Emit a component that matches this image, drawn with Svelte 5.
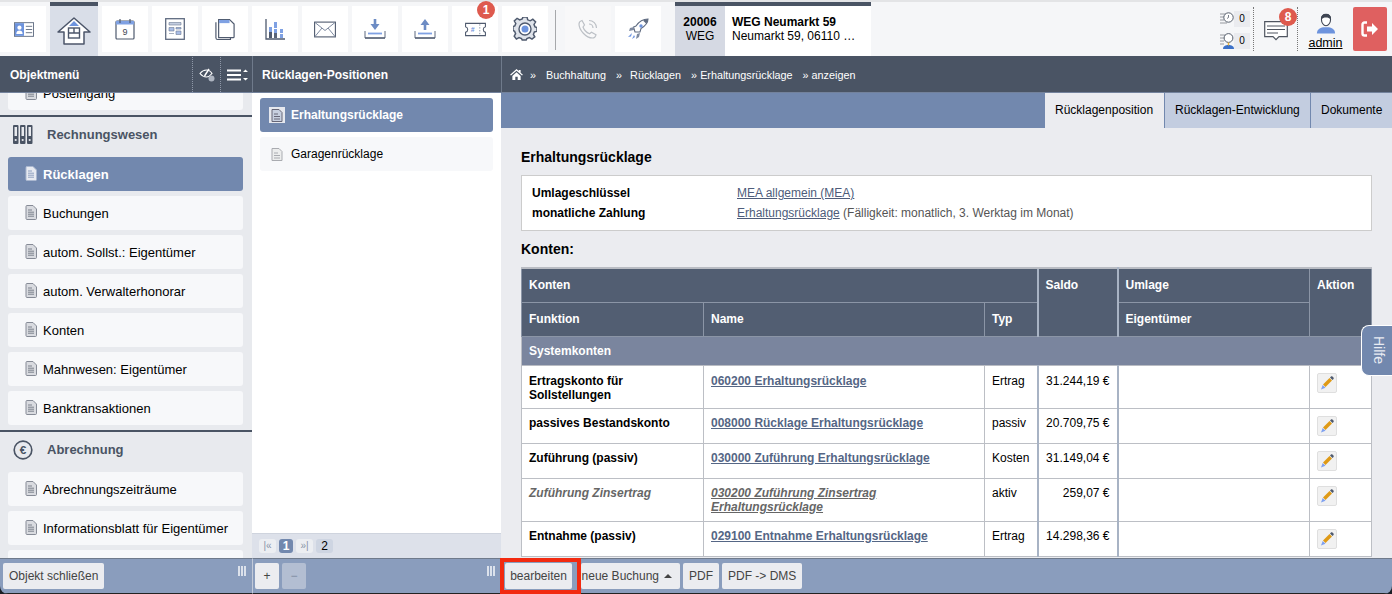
<script>
  const sideA = ['Buchungen','autom. Sollst.: Eigentümer','autom. Verwalterhonorar','Konten','Mahnwesen: Eigentümer','Banktransaktionen'];
  const sideB = ['Abrechnungszeiträume','Informationsblatt für Eigentümer',''];
  const rows = [
    {f:'Ertragskonto für Sollstellungen',n:'060200 Erhaltungsrücklage',t:'Ertrag',s:'31.244,19 €'},
    {f:'passives Bestandskonto',n:'008000 Rücklage Erhaltungsrücklage',t:'passiv',s:'20.709,75 €'},
    {f:'Zuführung (passiv)',n:'030000 Zuführung Erhaltungsrücklage',t:'Kosten',s:'31.149,04 €'},
    {f:'Zuführung Zinsertrag',n:'030200 Zuführung Zinsertrag Erhaltungsrücklage',t:'aktiv',s:'259,07 €',muted:true},
    {f:'Entnahme (passiv)',n:'029100 Entnahme Erhaltungsrücklage',t:'Ertrag',s:'14.298,36 €'}
  ];
</script>

{#snippet doc()}
  <svg class="doc" viewBox="0 0 12 15" width="12" height="15"><path d="M1 1.500C1 .9 1.400.5 2 .5h6l3.500 3.500v9.500c0 .6-.4 1-1 1H2c-.6 0-1-.4-1-1z" fill="#d9dbe0" stroke="#868b96"/><path d="M3 5h4M3 7.200h6M3 9.200h6M3 11.200h6" stroke="#7c818c" fill="none"/></svg>
{/snippet}

{#snippet grip()}
  <svg class="grip" viewBox="0 0 9 10" width="9" height="10"><path d="M1 0v10M4 0v10M7 0v10" stroke="#fff" stroke-width="1.400"/></svg>
{/snippet}

<div class="app">
  <header class="top">
    <nav class="tiles">
      <button class="tile first" aria-label="Kontakt">
        <svg viewBox="0 0 22 16" width="20" height="15"><rect x=".5" y=".5" width="21" height="15" fill="#fff" stroke="#5f6b80"/><rect x="1" y="1" width="10" height="14" fill="#6d93dd"/><circle cx="6" cy="6" r="2.300" fill="#fff"/><path d="M2.500 13c0-3 1.500-4 3.500-4s3.500 1 3.500 4z" fill="#fff"/><path d="M13 4.500h7M13 8h7M13 11.500h7" stroke="#5f6b80"/></svg>
      </button>
      <button class="tile home" aria-label="Objekt">
        <svg viewBox="0 0 34 28" width="34" height="28"><path d="M1 15 17 1l16 14h-6v12H7V15z" fill="#fff" stroke="#4c566a" stroke-width="1.500" stroke-linejoin="round"/><path d="M12 9l5-5 5 5z" fill="#6d93dd"/><rect x="11.500" y="11" width="11" height="10" fill="#fff" stroke="#4c566a" stroke-width="1.400"/><path d="M17 11v5M11.500 16h11" stroke="#4c566a" stroke-width="1.400"/></svg>
      </button>
      <button class="tile" aria-label="Kalender">
        <svg viewBox="0 0 20 22" width="20" height="22"><rect x="1" y="3" width="18" height="18" rx="1" fill="#fff" stroke="#4f5a6e" stroke-width="1.200"/><path d="M1 3h18v3.500H1z" fill="#7fa1e3"/><path d="M5 1v4M15 1v4" stroke="#4f5a6e" stroke-width="1.200"/><text x="10" y="17" class="cal">9</text></svg>
      </button>
      <button class="tile" aria-label="Formular">
        <svg viewBox="0 0 20 22" width="20" height="22"><rect x=".7" y=".7" width="18.600" height="20.600" fill="#fff" stroke="#5f6b80" stroke-width="1.300"/><path d="M4 4.500h12v2.500H4z" fill="#c3cde0" stroke="#6c7a93" stroke-width=".6"/><path d="M4 9.500h5v3.500H4zM11 9.500h5v1.500h-5zM4 15.500h5M11 13h5v3.500h-5z" fill="#a9bde6" stroke="#6c7a93" stroke-width=".6"/></svg>
      </button>
      <button class="tile" aria-label="Dokumente">
        <svg viewBox="0 0 22 24" width="20" height="23"><path d="M1 4v17c0 1 .7 2 2 2h14v-2" fill="none" stroke="#4f5a6e" stroke-width="1.300"/><path d="M4 1h12l5 5v14c0 .6-.4 1-1 1H4z" fill="#fff" stroke="#4f5a6e" stroke-width="1.300"/><path d="M4.500 1.500H16v3.500H4.500z" fill="#7fa1e3"/></svg>
      </button>
      <button class="tile" aria-label="Statistik">
        <svg viewBox="0 0 20 21" width="20" height="21"><path d="M1 0v20h19" fill="none" stroke="#4f5a6e" stroke-width="1.300"/><path d="M4 8h3v11H4zM9 3h3v6H9zM9 10h3v9H9zM15 10h3v4h-3zM15 15h3v4h-3z" fill="#7fa1e3"/><path d="M4 13h3v6H4z" fill="#4f5a6e"/><path d="M9 14h3v5H9z" fill="#5a6579"/></svg>
      </button>
      <button class="tile" aria-label="Post">
        <svg viewBox="0 0 22 16" width="22" height="17"><rect x=".6" y=".6" width="20.800" height="14.800" fill="#fff" stroke="#4f5a6e" stroke-width="1.100"/><path d="M1 1l10 8 10-8M1 15l7-8.500M21 15l-7-8.500" fill="none" stroke="#7e8aa0"/></svg>
      </button>
      <button class="tile" aria-label="Import">
        <svg viewBox="0 0 22 20" width="22" height="20"><path d="M1 12v7h20v-7" fill="none" stroke="#5f6b80"/><path d="M1 19h20" stroke="#4f5a6e" stroke-width="1.300"/><path d="M4 14.500h14" stroke="#7fa1e3" stroke-width="1.800"/><path d="M9.700 0h2.600v5h3.200L11 11 6.500 5h3.200z" fill="#6d8cc4"/></svg>
      </button>
      <button class="tile" aria-label="Export">
        <svg viewBox="0 0 22 20" width="22" height="20"><path d="M1 12v7h20v-7" fill="none" stroke="#5f6b80"/><path d="M1 19h20" stroke="#4f5a6e" stroke-width="1.300"/><path d="M4 14.500h14" stroke="#7fa1e3" stroke-width="1.800"/><path d="M9.700 11h2.600V6h3.200L11 0 6.500 6h3.200z" fill="#6d8cc4"/></svg>
      </button>
      <button class="tile badged" aria-label="Tickets">
        <svg viewBox="0 0 22 14" width="21" height="15"><path d="M.6.6h20.800v3.500a3 3 0 0 0 0 5.800v3.500H.6V9.900a3 3 0 0 0 0-5.800z" fill="#fff" stroke="#4f5a6e" stroke-width="1.100"/><path d="M15.500 1.500v11" stroke="#8a94a6" stroke-dasharray="1.500 1.500"/><text x="8" y="10" class="hash">#</text></svg>
        <span class="badge b1">1</span>
      </button>
      <button class="tile" aria-label="Einstellungen">
        <svg viewBox="0 0 24 24" width="24" height="24"><path d="M10 1h4l.7 3 2.500 1 2.600-1.600 2.800 2.800L21 8.800l1 2.500 2 .7v4l-2.600.6-1 2.500 1.400 2.600-2.800 2.300-2.600-1.500-2.500 1-.7 1.500h-4l-.7-1.500-2.500-1-2.600 1.500L1.200 21l1.400-2.600-1-2.500L0 15v-4l1.800-.7 1-2.500-1.500-2.600 2.800-2.800 2.600 1.600 2.500-1z" transform="translate(0 -1) scale(1 .96)" fill="#dfe3ea" stroke="#4f5a6e" stroke-width="1.500"/><circle cx="12" cy="12" r="6" fill="#fff" stroke="#4f5a6e" stroke-width="1.400"/><circle cx="12" cy="12" r="3.500" fill="#6d93dd"/></svg>
      </button>
      <span class="sep"></span>
      <button class="tile off" aria-label="Telefon">
        <svg viewBox="0 0 20 20" width="20" height="20"><path d="M4 1.500 6.500 6 5 8c1 2.800 3.500 5.500 6.500 6.800l2-1.600 4.500 2.600c-.5 2-2 3.200-3.500 3.200C8 19 1 11 1 5c0-1.600 1.300-3 3-3.500z" fill="none" stroke="#bcc0c6" stroke-width="1.200"/><path d="M11 1.500a7.500 7.500 0 0 1 7.500 7.500M11 5a4 4 0 0 1 4 4" fill="none" stroke="#bcc0c6" stroke-width="1.200"/></svg>
      </button>
      <button class="tile" aria-label="Start">
        <svg viewBox="0 0 22 22" width="22" height="22"><path d="M21 1c-5 0-9 2.500-12 7l-2.500 1L8 14l5 0 1-3.500C18 8 21 5 21 1z" fill="#fff" stroke="#5f6b80" stroke-width="1.100"/><path d="M21 1c-2 .2-3.500.8-4.800 1.800l2.800 2.800C20.200 4.300 20.800 3 21 1z" fill="#5f6b80"/><circle cx="14" cy="8" r="1.700" fill="#6d93dd"/><path d="M7 9 3 10l-1 3 5-1zM13 15l-1 4-3 2 1-5z" fill="#7e8aa0"/><path d="M5 15l-4 4 3-.5z M7 17l-2 4 3-2z" fill="#6d93dd"/></svg>
      </button>
    </nav>
    <div class="objtab">
      <div class="objno"><b>20006</b><span>WEG</span></div>
      <div class="objname"><b>WEG Neumarkt 59</b><span>Neumarkt 59, 06110 …</span></div>
    </div>
    <div class="right">
      <div class="counters">
        <div class="cnt">
          <svg viewBox="0 0 14 14" width="14" height="14"><path d="M0 2h6M0 5h4M0 8h4M0 11h7" stroke="#c5c7cb" stroke-width="1.800"/><circle cx="8.500" cy="5.500" r="4.700" fill="#fff" stroke="#555d6b"/><path d="M8.500 3v2.500L7 6.500" fill="none" stroke="#555d6b" stroke-width=".8"/></svg>
          <span>0</span>
        </div>
        <div class="cnt">
          <svg viewBox="0 0 14 16" width="14" height="16"><path d="M0 2h6M0 5h4M0 8h4M0 11h4" stroke="#c5c7cb" stroke-width="1.800"/><circle cx="8.500" cy="5" r="4.400" fill="#fff" stroke="#555d6b"/><path d="M3 16c0-3 2.500-4 5.500-4s5.500 1 5.500 4z" fill="#3c71c8"/><path d="M8.500 9l1 2-1 2-1-2z" fill="#e8b23b"/></svg>
          <span>0</span>
        </div>
      </div>
      <div class="msg">
        <svg viewBox="0 0 24 20" width="24" height="20"><path d="M.7.7h22.600v15H15l-3 3-3-3H.7z" fill="#fff" stroke="#4f5560" stroke-width="1.200"/><path d="M3 5h18M3 8.500h18M3 12h11" stroke="#4f5560"/></svg>
        <span class="badge b8">8</span>
      </div>
      <div class="user">
        <svg viewBox="0 0 22 22" width="20" height="21"><path d="M1 22c0-4.500 3-6 7-7h6c4 1 7 2.500 7 7z" fill="#6d93dd"/><path d="M6 6.500C6 3 8 1 11 1s5 2 5 5.500-2.200 7-5 7-5-3.500-5-7z" fill="#fff" stroke="#3f4653" stroke-width="1.200"/><path d="M5.500 7C5 2.500 8 .5 11 .5S17 2.500 16.500 7C15 5 13 4.500 11 4.500S7 5 5.500 7z" fill="#3f4653"/></svg>
        <a href="#admin">admin</a>
      </div>
      <button class="logout" aria-label="Abmelden">
        <svg viewBox="0 0 18 16" width="18" height="16"><path d="M6 1.500H3.500c-1.200 0-2 .8-2 2v9c0 1.200.8 2 2 2H6" fill="none" stroke="#fff" stroke-width="2.400"/><path d="M11 2l6 6-6 6v-3.500H6v-5h5z" fill="#fff"/></svg>
      </button>
    </div>
  </header>

  <div class="cols">
    <section class="col one">
      <div class="head">
        <strong>Objektmenü</strong>
        <span class="hicons">
          <span class="hicon">
            <svg viewBox="0 0 16 14" width="16" height="14"><path d="M1 5.500C3 3 5 2 7.500 2s4 1 5.500 3.500C11 8 9.500 9 7.500 9S3 8 1 5.500z" fill="none" stroke="#fff" stroke-width="1.200"/><path d="M5.500 8l4.500-7" stroke="#fff" stroke-width="1.400"/><circle cx="12.500" cy="10.500" r="3" fill="#aeb5c1"/></svg>
          </span>
          <span class="hicon">
            <svg viewBox="0 0 21 12" width="21" height="12"><path d="M0 1.500h14M0 6h14M0 10.500h14" stroke="#fff" stroke-width="2.200"/><path d="M16 3h5l-2.500-2.500zM16 9h5l-2.500 2.500z" fill="#fff"/></svg>
          </span>
        </span>
      </div>
      <div class="body side">
        <div class="scroll">
          <div class="item">{@render doc()}Posteingang</div>
          <h3 class="sec">
            <svg viewBox="0 0 20 20" width="20" height="20"><g fill="#4a5464"><rect x="0" y="0" width="5.500" height="19" rx="1"/><rect x="7" y="0" width="5.500" height="19" rx="1"/><rect x="14" y="0" width="5.500" height="19" rx="1"/></g><g fill="#e8eaee"><rect x="1.500" y="2" width="2.500" height="9"/><rect x="8.500" y="2" width="2.500" height="9"/><rect x="15.500" y="2" width="2.500" height="9"/><circle cx="2.700" cy="15" r="1.100"/><circle cx="9.700" cy="15" r="1.100"/><circle cx="16.700" cy="15" r="1.100"/></g></svg>
            Rechnungswesen
          </h3>
          <div class="item active">
            <svg class="doc" viewBox="0 0 12 15" width="12" height="15"><path d="M1 1.500C1 .9 1.400.5 2 .5h6l3.500 3.500v9.500c0 .6-.4 1-1 1H2c-.6 0-1-.4-1-1z" fill="#e7eaf1" stroke="#aab7cf"/><path d="M3 5h4M3 7.200h6M3 9.200h6M3 11.200h6" stroke="#8ea0c0"/></svg>
            Rücklagen
          </div>
          {#each sideA as s}
            <div class="item">{@render doc()}{s}</div>
          {/each}
          <h3 class="sec">
            <svg viewBox="0 0 22 22" width="20" height="20"><circle cx="11" cy="11" r="9.700" fill="none" stroke="#4a5464" stroke-width="1.800"/><text x="11" y="15.500" class="euro">€</text></svg>
            Abrechnung
          </h3>
          {#each sideB as s}
            <div class="item">{#if s}{@render doc()}{/if}{s}</div>
          {/each}
        </div>
      </div>
      <div class="foot">
        <button class="btn">Objekt schließen</button>
        {@render grip()}
      </div>
    </section>

    <section class="col two">
      <div class="head"><strong>Rücklagen-Positionen</strong></div>
      <div class="body list">
        <div class="pos active">
          <span class="posic"><svg viewBox="0 0 12 13" width="12" height="13"><path d="M1 .5h7l3 3v9H1z" fill="#c7cfdf" stroke="#667"/><path d="M3 5h4M3 7.500h6M3 10h6" stroke="#667"/></svg></span>
          Erhaltungsrücklage
        </div>
        <div class="pos">
          <span class="posic plain"><svg viewBox="0 0 12 13" width="12" height="13"><path d="M1 .5h7l3 3v9H1z" fill="#eceded" stroke="#a9abb0"/><path d="M3 5h4M3 7.500h6M3 10h6" stroke="#a9abb0"/></svg></span>
          Garagenrücklage
        </div>
      </div>
      <div class="pager">
        <span class="pg">|«</span><span class="pg cur">1</span><span class="pg">»|</span><span class="pg pgn">2</span>
      </div>
      <div class="foot">
        <button class="btn sq">+</button>
        <button class="btn sq dis">−</button>
        {@render grip()}
      </div>
    </section>

    <section class="col three">
      <div class="head crumbs">
        <svg viewBox="0 0 14 12" width="13" height="11"><path d="M7 0 0 6.200l1 1L7 2l6 5.200 1-1-2.500-2.200V1h-2v1.300zM2.500 7.500V12h3.200V8.500h2.600V12h3.200V7.500L7 3.500z" fill="#fff"/></svg>
        <span class="c c0"><i>»</i>Buchhaltung</span>
        <span class="c c1"><i>»</i>Rücklagen</span>
        <span class="c"><i>»</i>Erhaltungsrücklage</span>
        <span class="c"><i>»</i>anzeigen</span>
      </div>
      <div class="tabs">
        <span class="tab on">Rücklagenposition</span>
        <span class="tab">Rücklagen-Entwicklung</span>
        <span class="tab">Dokumente</span>
      </div>
      <div class="body content">
        <h2>Erhaltungsrücklage</h2>
        <dl class="info">
          <dt>Umlageschlüssel</dt>
          <dd><a href="#mea">MEA allgemein (MEA)</a></dd>
          <dt>monatliche Zahlung</dt>
          <dd><a href="#er">Erhaltungsrücklage</a> <span>(Fälligkeit: monatlich, 3. Werktag im Monat)</span></dd>
        </dl>
        <h4>Konten:</h4>
        <table>
          <colgroup><col class="w1"/><col class="w2"/><col class="w3"/><col class="w4"/><col class="w5"/><col class="w6"/></colgroup>
          <thead>
            <tr><th colspan="3">Konten</th><th rowspan="2" class="sal">Saldo</th><th>Umlage</th><th rowspan="2">Aktion</th></tr>
            <tr><th>Funktion</th><th>Name</th><th>Typ</th><th>Eigentümer</th></tr>
          </thead>
          <tbody>
            <tr class="group"><td colspan="6">Systemkonten</td></tr>
            {#each rows as r}
              <tr class:muted={r.muted}>
                <td class="fn">{r.f}</td>
                <td class="nm"><a href="#k">{r.n}</a></td>
                <td>{r.t}</td>
                <td class="sal num">{r.s}</td>
                <td></td>
                <td class="act">
                  <button class="pen" aria-label="bearbeiten">
                    <svg viewBox="0 0 14 14" width="14" height="14"><path d="M3 8.500 9.500 2l2.500 2.500L5.500 11z" fill="#df9a16"/><path d="M10 1.500l1-1c.4-.4 1-.4 1.400 0l1.100 1.100c.4.400.4 1 0 1.400l-1 1z" fill="#4f5a6e"/><path d="M2.700 9l-1.700 4.500 4.500-1.700z" fill="#7fa1f0"/></svg>
                  </button>
                </td>
              </tr>
            {/each}
          </tbody>
        </table>
      </div>
      <div class="foot actions">
        <span class="mark"><button class="btn">bearbeiten</button></span>
        <button class="btn tuck">neue Buchung <svg viewBox="0 0 8 4" width="8" height="4"><path d="M0 4l4-4 4 4z" fill="#444"/></svg></button>
        <button class="btn">PDF</button>
        <button class="btn">PDF -&gt; DMS</button>
      </div>
      <button class="hilfe">Hilfe</button>
    </section>
  </div>
</div>

<style>
  :global(body) { margin: 0; background: #1b1f26; }
  .app { width: 1392px; height: 594px; display: flex; flex-direction: column; overflow: hidden; font: 12px/14px "Liberation Sans", Arial, sans-serif; color: #000; border-radius: 0 0 8px 8px; }
  button { font: inherit; border: 0; padding: 0; cursor: pointer; }
  a { color: inherit; }

  .top { height: 54px; flex: none; display: flex; background: #f5f6f8; border-top: 2px solid #e3e4e6; }
  .tiles { display: flex; align-items: flex-start; padding-top: 4px; gap: 4px; width: 675px; flex: none; box-sizing: border-box; }
  .tile { width: 46px; height: 46px; background: #fff; display: flex; align-items: center; justify-content: center; position: relative; flex: none; }
  .first svg { margin-left: 2px; }
  .home { width: 48px; height: 54px; margin-top: -4px; background: #d9dee8; border-top: 4px solid #4a5464; box-sizing: border-box; }
  .off { background: #f8f8f9; }
  .sep { width: 1px; height: 40px; background: #a6a8ab; margin: 4px 5px 0 3px; flex: none; }
  .cal { font: 9px "Liberation Sans", sans-serif; text-anchor: middle; fill: #3f4653; }
  .hash { font: italic bold 7px "Liberation Sans", sans-serif; text-anchor: middle; fill: #6d93dd; }
  .euro { font: bold 13px "Liberation Sans", sans-serif; text-anchor: middle; fill: #4a5464; }
  .badge { position: absolute; width: 18px; height: 18px; border-radius: 50%; background: #de5a4e; color: #fff; font-weight: bold; font-size: 12px; line-height: 18px; text-align: center; }
  .b1 { top: -5px; right: 3px; }

  .objtab { width: 196px; flex: none; display: flex; background: #fff; border-top: 4px solid #4a5464; box-sizing: border-box; }
  .objno { width: 50px; background: #d5d9e3; display: flex; flex-direction: column; align-items: center; padding-top: 9px; line-height: 14px; }
  .objname { display: flex; flex-direction: column; padding: 9px 0 0 7px; line-height: 14px; }

  .right { flex: 1; display: flex; align-items: flex-start; padding-top: 5px; }
  .counters { margin-left: 349px; height: 44px; padding-right: 2px; border-right: 1px dotted #777; display: flex; flex-direction: column; gap: 6px; padding-top: 4px; box-sizing: border-box; width: 34px; }
  .cnt { display: flex; align-items: center; height: 16px; }
  .cnt svg { flex: none; }
  .cnt span { width: 16px; height: 16px; background: #eaebef; font-size: 10px; line-height: 16px; text-align: center; flex: none; }
  .msg { width: 44px; height: 44px; border-right: 1px dotted #777; position: relative; display: flex; box-sizing: border-box; padding: 14px 0 0 10px; }
  .msg .badge { left: 25px; top: 1px; }
  .user { width: 55px; height: 44px; display: flex; flex-direction: column; align-items: center; }
  .user svg { margin: 6px 0 2px; }
  .user a { font-size: 12.500px; line-height: 14px; color: #000; }
  .logout { width: 34px; height: 44px; background: #df6060; border-radius: 2px; display: flex; align-items: center; justify-content: center; }

  .cols { flex: 1; min-height: 0; display: grid; grid-template-columns: 252px 249px 1fr; grid-template-rows: minmax(0, 1fr); }
  .col { display: flex; flex-direction: column; min-width: 0; min-height: 0; position: relative; }
  .head { height: 37px; flex: none; box-sizing: border-box; background: #4a5464; border-bottom: 1px solid #73829c; color: #fff; display: flex; align-items: center; padding: 1px 0 0 10px; }
  .col + .col .head { border-left: 1px solid #6f7a8b; padding-left: 9px; }
  .body { flex: 1; min-height: 0; overflow: hidden; }
  .foot { height: 36px; flex: none; box-sizing: border-box; background: #8a9dbd; border-top: 1px solid #6f7a8b; border-bottom: 1px solid #222; display: flex; align-items: center; gap: 3px; padding: 0 0 1px 3px; position: relative; }
  .col + .col .foot { border-left: 1px solid #c2cad9; padding-left: 2px; }
  .grip { position: absolute; right: 5px; top: 7px; }

  .hicons { margin-left: auto; display: flex; height: 100%; }
  .hicon { width: 28px; border-left: 1px dotted #8f98a8; display: flex; align-items: center; justify-content: center; box-sizing: border-box; }
  .hicon:last-child { width: 32px; padding-left: 2px; }

  .side { background: #e8eaee; }
  .scroll { margin-top: -17px; }
  .item { margin: 0 8px 5px; width: 235px; height: 34px; box-sizing: border-box; background: #f7f8fa; border-radius: 3px; display: flex; align-items: center; padding: 1px 0 0 17px; font-size: 13px; }
  .doc { margin: -2px 6px 0 0; flex: none; }
  .item.active { background: #7288ae; color: #fff; font-weight: bold; }
  .sec { margin: 0; height: 42px; box-sizing: border-box; border-top: 2px solid #4a5464; display: flex; align-items: center; gap: 14px; padding: 0 0 4px 13px; font-size: 13px; color: #4a5464; font-weight: bold; }
  .sec svg { flex: none; }

  .list { background: #fff; padding: 5px 8px 0; }
  .pos { height: 34px; margin-bottom: 5px; box-sizing: border-box; background: #f7f8fa; border-radius: 3px; display: flex; align-items: center; padding-left: 9px; }
  .pos.active { background: #7288ae; color: #fff; font-weight: bold; }
  .posic { width: 16px; height: 16px; background: #e6e8ee; display: flex; align-items: center; justify-content: center; margin-right: 6px; }
  .posic.plain { background: transparent; }
  .pager { height: 25px; flex: none; background: #dde1ea; display: flex; align-items: center; gap: 3px; padding-left: 7px; border-top: 1px solid #cfd4de; box-sizing: border-box; }
  .pg { width: 17px; height: 14px; background: #eceef2; border-radius: 3px; color: #8893a6; font-size: 10px; line-height: 14px; text-align: center; }
  .pg.cur { width: 14px; background: #7288ae; color: #fff; font-weight: bold; font-size: 12px; }
  .pg.pgn { background: #ced5e2; color: #000; font-size: 12px; }

  .btn { height: 26px; padding: 0 6px; background: #ebecf0; color: #444; border-radius: 2px; }
  .sq { width: 24px; padding: 0; }
  .dis { background: #b3bed2; color: #7f8ba0; }

  .col + .col .crumbs { font-size: 10.800px; padding-left: 8px; }
  .crumbs svg { flex: none; }
  .c { margin-left: 10px; white-space: nowrap; }
  .c0 { margin-left: 7px; }
  .c i { font-style: normal; margin-right: 3px; }
  .c0 i { margin-right: 10px; }
  .c1 i { margin-right: 8px; }

  .tabs { height: 35px; flex: none; background: #7288ae; display: flex; justify-content: flex-end; }
  .tab { background: #c3cde0; border-left: 1px solid #7288ae; padding: 10px 10px 0; height: 35px; box-sizing: border-box; white-space: nowrap; }
  .tab.on { background: #ebecf0; width: 120px; }
  .tab:nth-child(2) { width: 146px; }
  .tab:last-child { width: 82px; }

  .content { background: #ebecf0; padding: 0 20px; }
  h2 { margin: 21px 0 10px; font-size: 14px; line-height: 16px; font-weight: bold; }
  .info { margin: 0; height: 56px; box-sizing: border-box; background: #fff; border: 1px solid #ccc; display: grid; grid-template-columns: 205px 1fr; grid-auto-rows: 20px; padding: 10px 10px 0; align-content: start; }
  .info dt { font-weight: bold; }
  .info dd { margin: 0; }
  .info a { color: #4e5c7a; }
  .info span { color: #555; }
  h4 { margin: 10px 0 10px; font-size: 14px; line-height: 16px; font-weight: bold; }

  table { width: 850px; border-collapse: collapse; table-layout: fixed; border: 1px solid #b9bcc3; background: #fff; }
  .w1 { width: 182px; } .w2 { width: 281px; } .w3 { width: 53px; } .w4 { width: 80px; } .w5 { width: 192px; } .w6 { width: 62px; }
  th { background: #525e72; color: #fff; text-align: left; vertical-align: top; font-weight: bold; padding: 9px 7px 0; height: 34px; box-sizing: border-box; border: 1px solid #8b95a6; }
  thead tr:first-child th { border-top: 2px solid #b9bcc3; }
  td { padding: 7px 7px 6px; height: 35px; box-sizing: border-box; vertical-align: top; border: 1px solid #bcbfc5; }
  tbody tr:nth-child(2) td { padding-top: 8px; }
  .muted td { padding-bottom: 7px; }
  .group td { background: #7a859e; color: #fff; font-weight: bold; height: 29px; padding: 0 7px; border: 1px solid #b9bcc3; vertical-align: middle; }
  .sal { border-left: 2px solid #a8b3c4; border-right: 2px solid #a8b3c4; }
  .num { text-align: right; padding-right: 7px; }
  .fn { font-weight: bold; }
  .nm a { color: #556685; font-weight: bold; }
  .muted .fn { color: #666; font-style: italic; }
  .muted .nm a { color: #666; font-style: italic; }
  tbody tr td.act { padding: 7px 7px 0; }
  .pen { width: 20px; height: 20px; background: #f1f1f1; border: 1px solid #dfdfdf; border-radius: 2px; display: flex; align-items: center; justify-content: center; box-sizing: border-box; }

  .col + .col .actions { padding-left: 0; }
  .mark { position: relative; z-index: 1; box-sizing: border-box; height: 36px; margin: 0 0 -1px -2px; border: 4px solid #f22a10; display: flex; align-items: center; background: #8a9dbd; width: 81px; padding-left: 1px; }
  .mark .btn { width: 67px; padding: 0; }
  .tuck { margin-left: -3px; padding: 0 8px 0 0; display: flex; align-items: center; gap: 5px; width: 99px; justify-content: flex-end; }
  .hilfe { position: absolute; right: 0; top: 269px; width: 31px; height: 51px; background: #7288ae; color: #e8ebf2; border: 1px solid #fff; border-right: 0; border-radius: 8px 0 0 8px; font-size: 14px; box-sizing: border-box; writing-mode: vertical-rl; text-align: center; padding: 0 0 0 3px; }
</style>
